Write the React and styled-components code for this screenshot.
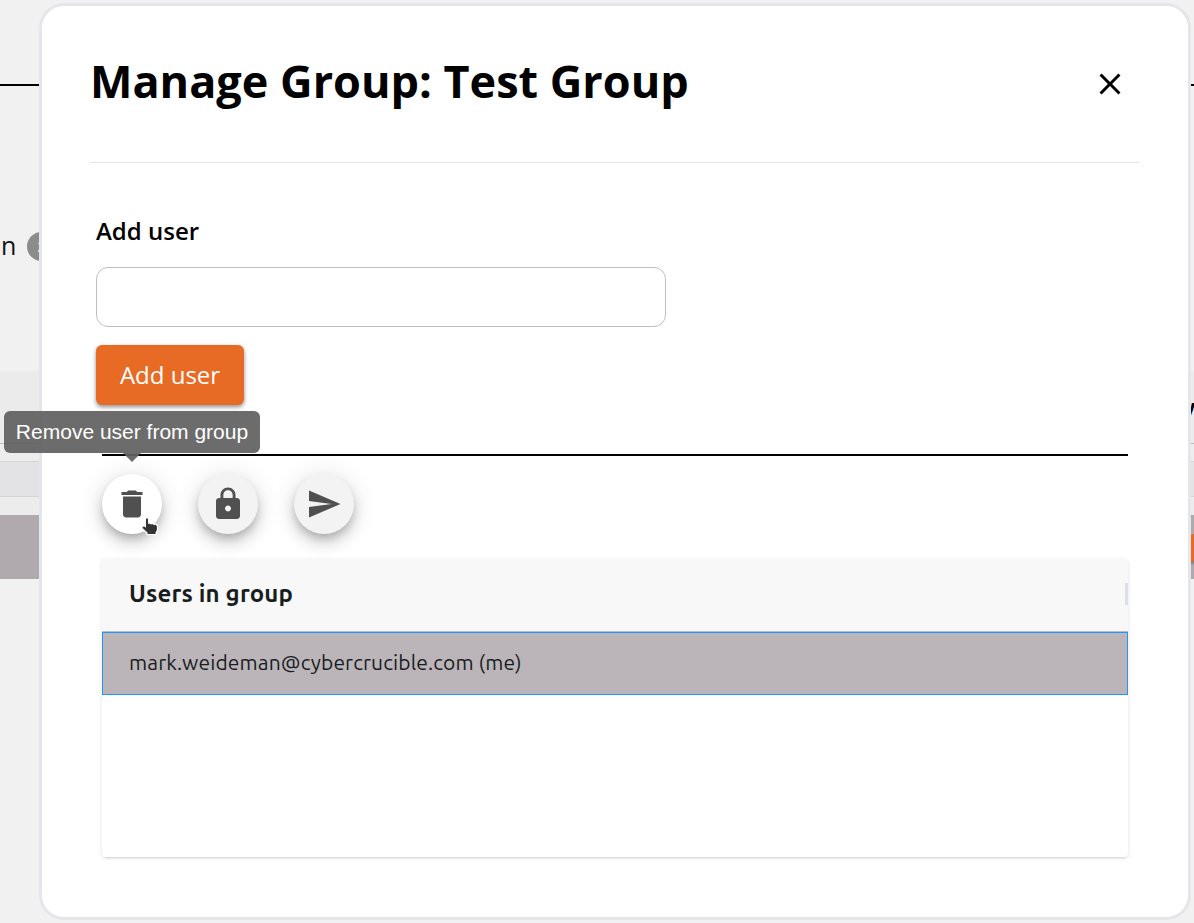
import styled, { createGlobalStyle } from "styled-components";
import { MdClose, MdDelete, MdLock, MdSend } from "react-icons/md";

const GlobalStyle = createGlobalStyle`
    * {
        box-sizing: border-box;
    }
    body {
        margin: 0;
        height: 923px;
        overflow: hidden;
        background-color: #f1f1f1;
        font-family: "Open Sans", "Noto Sans", sans-serif;
        color: #000;
    }
`;
const Screen = styled.div`
    position: relative;
    width: 1194px;
    height: 923px;
    overflow: hidden;
`;
const Page = styled.div`
    display: flex;
    flex-flow: column nowrap;
    height: 923px;
    padding-top: 84px;
`;
const PageRule = styled.div`
    height: 2px;
    background-color: #000;
`;
const PageHeading = styled.div`
    display: flex;
    flex-flow: row nowrap;
    align-items: center;
    height: 285px;
    padding: 35px 0 0 1px;
    color: #111;
    font-size: 25px;
    gap: 11px;
`;
const HeadingText = styled.span`
    margin-bottom: 2px;
`;
const HelpBadge = styled.div`
    width: 29px;
    height: 29px;
    border-radius: 50%;
    background-color: #8c8c8c;
    color: #f1f1f1;
    font-size: 15px;
    font-weight: 700;
    display: flex;
    align-items: center;
    justify-content: center;
`;
const PageRow = styled.div`
    height: ${(props) => props.$height}px;
    background-color: ${(props) => props.$color};
    border-bottom: ${(props) => props.$line ? `1px solid ${props.$line}` : "none"};
    display: flex;
    justify-content: flex-end;
    align-items: center;
`;
const PageColumn = styled.span`
    width: 11px;
    font-family: Ubuntu, "Noto Sans", sans-serif;
    font-size: 23px;
    font-weight: 700;
`;
const PageButton = styled.div`
    width: 5px;
    height: 28px;
    margin-top: 2px;
    border-radius: 6px 0 0 6px;
    background-color: #e76b25;
    box-shadow: 0 2px 3px rgba(0, 0, 0, 0.4);
`;
const Modal = styled.div`
    position: absolute;
    top: 3px;
    left: 39px;
    width: 1152px;
    height: 917px;
    padding: 0 48px;
    border: 3px solid #e5e6ea;
    border-radius: 25px;
    background-color: #fff;
`;
const ModalHeader = styled.div`
    display: flex;
    flex-flow: row nowrap;
    justify-content: space-between;
    align-items: center;
    height: 157px;
    padding: 0 12px 0 0;
    border-bottom: 1px solid #e5e6e8;
`;
const Title = styled.h1`
    margin: 0 0 7px;
    font-size: 45px;
    line-height: 60px;
    font-weight: 700;
    white-space: nowrap;
`;
const CloseButton = styled.button`
    width: 36px;
    height: 36px;
    padding: 0;
    border: none;
    background: none;
    font-size: 36px;
    line-height: 0;
    color: #000;
`;
const Form = styled.div`
    display: flex;
    flex-flow: column nowrap;
    align-items: flex-start;
    padding: 50px 0 0 6px;
`;
const Label = styled.label`
    font-size: 24px;
    line-height: 36px;
    font-weight: 600;
`;
const Input = styled.input`
    width: 570px;
    height: 60px;
    margin-top: 18px;
    border: 1px solid #bfbfbf;
    border-radius: 12px;
    background-color: #fff;
`;
const SubmitButton = styled.button`
    width: 148px;
    height: 60px;
    margin-top: 18px;
    padding: 0 0 1px;
    border: none;
    border-radius: 6px;
    background-color: #e76b25;
    box-shadow: 0 2px 4px rgba(0, 0, 0, 0.45);
    color: #fff;
    font-family: "Open Sans", "Noto Sans", sans-serif;
    font-size: 24px;
`;
const Section = styled.div`
    margin: 49px 12px 0;
    border-top: 2px solid #000;
`;
const Actions = styled.div`
    display: flex;
    flex-flow: row nowrap;
    gap: 36px;
    padding: 18px 0 25px;
`;
const ActionButton = styled.button`
    position: relative;
    width: 60px;
    height: 60px;
    padding: 0;
    border: none;
    border-radius: 50%;
    background-color: ${(props) => (props.$active ? "#fff" : "#f3f3f3")};
    box-shadow: 0 5px 8px -2px rgba(0, 0, 0, 0.2),
        0 9px 15px rgba(0, 0, 0, 0.14), 0 2px 27px rgba(0, 0, 0, 0.12);
    color: #505050;
    font-size: 36px;
    line-height: 0;
    display: flex;
    align-items: center;
    justify-content: center;
`;
const Tooltip = styled.div`
    position: absolute;
    z-index: 2;
    left: -98px;
    bottom: 81px;
    width: 256px;
    height: 42px;
    border-radius: 6px;
    background-color: rgba(97, 97, 97, 0.93);
    color: #fff;
    font-family: "Liberation Sans", sans-serif;
    font-size: 21px;
    line-height: 42px;
    text-align: center;
    white-space: nowrap;
    &::after {
        content: "";
        position: absolute;
        top: 42px;
        left: 119px;
        border: 9px solid transparent;
        border-top-color: rgba(97, 97, 97, 0.93);
        border-bottom: none;
    }
`;
const Cursor = styled.svg`
    position: absolute;
    left: 38px;
    top: 42px;
    width: 20px;
    height: 20px;
`;
const Table = styled.div`
    height: 298px;
    border-radius: 4px;
    background-color: #fff;
    box-shadow: 0 3px 2px -2px rgba(0, 0, 0, 0.1),
        0 1px 4px rgba(0, 0, 0, 0.12);
    color: #181d1f;
    font-family: Ubuntu, "Noto Sans", sans-serif;
`;
const TableHeader = styled.div`
    display: flex;
    flex-flow: row nowrap;
    align-items: center;
    justify-content: space-between;
    height: 73px;
    padding: 0 0 2px 27px;
    border-bottom: 1px solid #babfc7;
    background-color: #f8f8f8;
    font-size: 24px;
    font-weight: 700;
`;
const HeaderText = styled.span`
    margin-bottom: 2px;
    letter-spacing: 0.15px;
`;
const ResizeHandle = styled.div`
    width: 3px;
    height: 22px;
    background-color: #dde0e8;
`;
const TableRow = styled.div`
    display: flex;
    align-items: center;
    height: 63px;
    padding: 0 0 3px 26px;
    border: 1px solid #2196f3;
    background-color: #bbb5b9;
    font-size: 21px;
`;
const RowText = styled.span`
    letter-spacing: 0.11px;
`;

const App = () => {
    return (
        <Screen>
            <GlobalStyle />
            <Page>
                <PageRule />
                <PageHeading>
                    <HeadingText>n</HeadingText>
                    <HelpBadge>2</HelpBadge>
                </PageHeading>
                <PageRow $height={73} $color="#ebebeb" $line="#bbbdbf">
                    <PageColumn>v</PageColumn>
                </PageRow>
                <PageRow $height={18} $color="#ededed" $line="#d5d5d7" />
                <PageRow $height={35} $color="#e3e3e5" $line="#d5d5d7" />
                <PageRow $height={18} $color="#ececec" />
                <PageRow $height={64} $color="#b0aaae">
                    <PageButton />
                </PageRow>
            </Page>
            <Modal>
                <ModalHeader>
                    <Title>Manage Group: Test Group</Title>
                    <CloseButton>
                        <MdClose />
                    </CloseButton>
                </ModalHeader>
                <Form>
                    <Label>Add user</Label>
                    <Input />
                    <SubmitButton>Add user</SubmitButton>
                </Form>
                <Section>
                    <Actions>
                        <ActionButton $active>
                            <MdDelete />
                            <Tooltip>Remove user from group</Tooltip>
                            <Cursor viewBox="0 0 20 20">
                                <path
                                    d="M6 3Q7 1.600 8 3V8l1.300-.5 1.500.9 1.500-.4 1.500 1 1.500-.3 1.600 1.300V14l-1.400 2.500V18H7.500v-1.500L2.800 12.300c-.8-.9.300-2.300 1.500-1.700L6 11.800z"
                                    fill="#333"
                                    stroke="#fff"
                                    strokeWidth="2.500"
                                    strokeLinejoin="round"
                                    paintOrder="stroke"
                                />
                            </Cursor>
                        </ActionButton>
                        <ActionButton>
                            <MdLock />
                        </ActionButton>
                        <ActionButton>
                            <MdSend />
                        </ActionButton>
                    </Actions>
                    <Table>
                        <TableHeader>
                            <HeaderText>Users in group</HeaderText>
                            <ResizeHandle />
                        </TableHeader>
                        <TableRow>
                            <RowText>mark.weideman@cybercrucible.com (me)</RowText>
                        </TableRow>
                    </Table>
                </Section>
            </Modal>
        </Screen>
    );
};
export default App;
